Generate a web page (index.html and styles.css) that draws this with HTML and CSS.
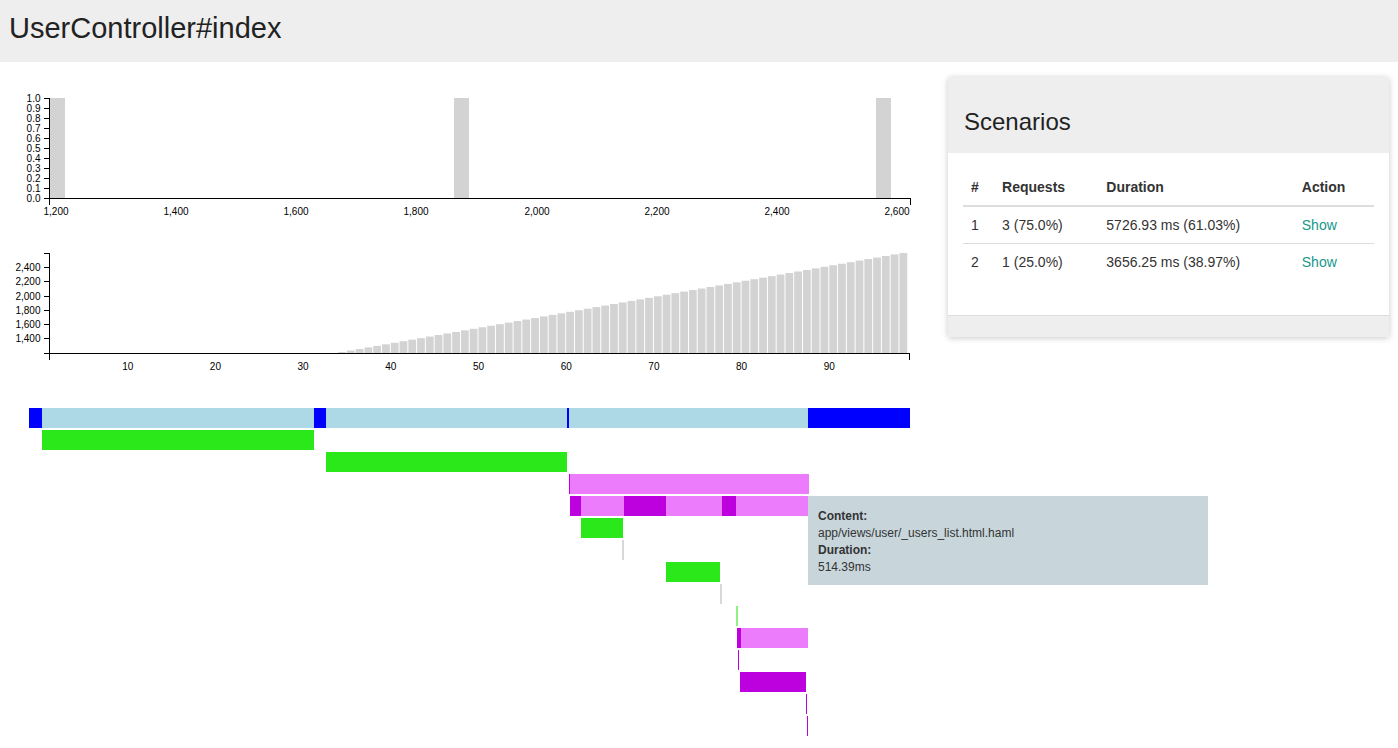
FILE: index.html
```html
<!DOCTYPE html>
<html>
<head>
<meta charset="utf-8">
<title>UserController#index</title>
<link rel="stylesheet" href="styles.css">
</head>
<body>
<header class="topbar"><h1 class="title">UserController#index</h1></header>
<main class="layout">
  <section class="charts">
    <svg class="chart" width="930" height="160" viewBox="0 62 930 160">
      <g class="bars">
        <rect x="50" y="98" width="15" height="100"/>
        <rect x="454" y="98" width="15" height="100"/>
        <rect x="876" y="98" width="15" height="100"/>
      </g>
      <g class="axis">
        <path d="M43.5,98.5H49.5V198.5H43.5"/>
        <path d="M49.5,204.5V198.5H910.5V204.5"/>
        <g class="ticks">
          <line x1="43.5" x2="49.5" y1="98.5" y2="98.5"/><line x1="43.5" x2="49.5" y1="108.5" y2="108.5"/><line x1="43.5" x2="49.5" y1="118.5" y2="118.5"/><line x1="43.5" x2="49.5" y1="128.5" y2="128.5"/><line x1="43.5" x2="49.5" y1="138.5" y2="138.5"/><line x1="43.5" x2="49.5" y1="148.5" y2="148.5"/><line x1="43.5" x2="49.5" y1="158.5" y2="158.5"/><line x1="43.5" x2="49.5" y1="168.5" y2="168.5"/><line x1="43.5" x2="49.5" y1="178.5" y2="178.5"/><line x1="43.5" x2="49.5" y1="188.5" y2="188.5"/>
        </g>
        <g class="ylabels">
          <text x="40.5" y="98.5" dy="0.32em">1.0</text>
          <text x="40.5" y="108.5" dy="0.32em">0.9</text>
          <text x="40.5" y="118.5" dy="0.32em">0.8</text>
          <text x="40.5" y="128.5" dy="0.32em">0.7</text>
          <text x="40.5" y="138.5" dy="0.32em">0.6</text>
          <text x="40.5" y="148.5" dy="0.32em">0.5</text>
          <text x="40.5" y="158.5" dy="0.32em">0.4</text>
          <text x="40.5" y="168.5" dy="0.32em">0.3</text>
          <text x="40.5" y="178.5" dy="0.32em">0.2</text>
          <text x="40.5" y="188.5" dy="0.32em">0.1</text>
          <text x="40.5" y="198.5" dy="0.32em">0.0</text>
        </g>
        <g class="xlabels">
          <text x="56" y="207.5" dy="0.71em">1,200</text>
          <text x="176" y="207.5" dy="0.71em">1,400</text>
          <text x="296" y="207.5" dy="0.71em">1,600</text>
          <text x="416" y="207.5" dy="0.71em">1,800</text>
          <text x="537" y="207.5" dy="0.71em">2,000</text>
          <text x="657" y="207.5" dy="0.71em">2,200</text>
          <text x="777" y="207.5" dy="0.71em">2,400</text>
          <text x="897" y="207.5" dy="0.71em">2,600</text>
        </g>
      </g>
    </svg>
    <svg class="chart" width="930" height="158" viewBox="0 222 930 158">
      <g class="bars" id="distbars"></g>
      <g class="axis">
        <path d="M43.5,253.5H49.5V353.5H43.5"/>
        <path d="M49.5,359.5V353.5H909.5V359.5"/>
        <g class="ticks">
          <line x1="43.5" x2="49.5" y1="267.5" y2="267.5"/><line x1="43.5" x2="49.5" y1="281.5" y2="281.5"/><line x1="43.5" x2="49.5" y1="296.5" y2="296.5"/><line x1="43.5" x2="49.5" y1="310.5" y2="310.5"/><line x1="43.5" x2="49.5" y1="324.5" y2="324.5"/><line x1="43.5" x2="49.5" y1="338.5" y2="338.5"/>
        </g>
        <g class="ylabels">
          <text x="40.5" y="267.5" dy="0.32em">2,400</text>
          <text x="40.5" y="281.5" dy="0.32em">2,200</text>
          <text x="40.5" y="296.5" dy="0.32em">2,000</text>
          <text x="40.5" y="310.5" dy="0.32em">1,800</text>
          <text x="40.5" y="324.5" dy="0.32em">1,600</text>
          <text x="40.5" y="338.5" dy="0.32em">1,400</text>
        </g>
        <g class="xlabels">
          <text x="127.7" y="362.5" dy="0.71em">10</text>
          <text x="215.4" y="362.5" dy="0.71em">20</text>
          <text x="303.1" y="362.5" dy="0.71em">30</text>
          <text x="390.8" y="362.5" dy="0.71em">40</text>
          <text x="478.5" y="362.5" dy="0.71em">50</text>
          <text x="566.2" y="362.5" dy="0.71em">60</text>
          <text x="653.9" y="362.5" dy="0.71em">70</text>
          <text x="741.6" y="362.5" dy="0.71em">80</text>
          <text x="829.3" y="362.5" dy="0.71em">90</text>
        </g>
      </g>
    </svg>
    <div class="timeline-wrap">
      <svg class="timeline" width="930" height="368" viewBox="0 380 930 368">
        <g>
          <rect class="req" x="29" y="408" width="12.7" height="20"/>
          <rect class="gap" x="41.7" y="408" width="272.3" height="20"/>
          <rect class="req" x="314" y="408" width="12" height="20"/>
          <rect class="gap" x="326" y="408" width="240.7" height="20"/>
          <rect class="req" x="566.7" y="408" width="2.6" height="20"/>
          <rect class="gap" x="569.3" y="408" width="239" height="20"/>
          <rect class="req" x="808.3" y="408" width="101.7" height="20"/>
        </g>
        <rect class="sql" x="41.7" y="430" width="272.3" height="20"/>
        <rect class="sql" x="326" y="452" width="240.7" height="20"/>
        <rect class="dark" x="569" y="474" width="1.3" height="20"/>
        <rect class="view" x="570.3" y="474" width="238.7" height="20"/>
        <rect class="dark" x="570.3" y="496" width="10.4" height="20"/>
        <rect class="view" x="580.7" y="496" width="43.6" height="20"/>
        <rect class="dark" x="624.3" y="496" width="41.7" height="20"/>
        <rect class="view" x="666" y="496" width="55.7" height="20"/>
        <rect class="dark" x="721.7" y="496" width="14.6" height="20"/>
        <rect class="view" x="736.3" y="496" width="72" height="20"/>
        <rect class="sql" x="580.7" y="518" width="42" height="20"/>
        <rect class="idle" x="622" y="540" width="2.3" height="20"/>
        <rect class="sql" x="666" y="562" width="54" height="20"/>
        <rect class="idle" x="720" y="584" width="2" height="20"/>
        <rect class="sql-light" x="736" y="606" width="1.7" height="20"/>
        <rect class="dark" x="737" y="628" width="4" height="20"/>
        <rect class="view" x="741" y="628" width="67" height="20"/>
        <rect class="dark" x="738" y="650" width="1.3" height="20"/>
        <rect class="dark" x="740" y="672" width="66" height="20"/>
        <rect class="dark" x="805.7" y="694" width="1.4" height="20"/>
        <rect class="dark" x="806.7" y="716" width="1.4" height="20"/>
      </svg>
      <div class="tooltip">
        <div class="tip-label">Content:</div>
        <div class="tip-value">app/views/user/_users_list.html.haml</div>
        <div class="tip-label">Duration:</div>
        <div class="tip-value">514.39ms</div>
      </div>
    </div>
  </section>
  <aside class="card">
    <div class="card-head"><h3 class="card-title">Scenarios</h3></div>
    <div class="card-body">
      <table class="scen">
        <thead>
          <tr><th class="c-num">#</th><th class="c-req">Requests</th><th class="c-dur">Duration</th><th class="c-act">Action</th></tr>
        </thead>
        <tbody>
          <tr><td>1</td><td>3 (75.0%)</td><td>5726.93 ms (61.03%)</td><td><a class="show" href="#">Show</a></td></tr>
          <tr><td>2</td><td>1 (25.0%)</td><td>3656.25 ms (38.97%)</td><td><a class="show" href="#">Show</a></td></tr>
        </tbody>
      </table>
    </div>
    <div class="card-foot"></div>
  </aside>
</main>
<script src="app.js"></script>
</body>
</html>
```

FILE: app.js
```js
(function () {
  var g = document.getElementById('distbars');
  var ns = 'http://www.w3.org/2000/svg';
  function x(v) { return 40.0 + 8.77 * v; }
  for (var i = 1; i <= 98; i++) {
    var h = (i - 33.4) * 1.55;
    if (h <= 0) continue;
    if (h > 100) h = 100;
    var r = document.createElementNS(ns, 'rect');
    r.setAttribute('x', x(i).toFixed(2));
    r.setAttribute('width', (x(i + 1) - x(i) - 1).toFixed(2));
    r.setAttribute('y', (353 - h).toFixed(2));
    r.setAttribute('height', h.toFixed(2));
    g.appendChild(r);
  }
})();
```

FILE: styles.css
```css
html, body {
  margin: 0;
  padding: 0;
  overflow: hidden;
}
body {
  font-family: "Liberation Sans", Arial, sans-serif;
  color: #333;
  background: #fff;
  font-size: 14px;
}
.topbar {
  height: 62px;
  box-sizing: border-box;
  background: #eee;
  padding: 11px 0 0 9px;
}
.title {
  margin: 0;
  font-size: 29px;
  line-height: 34px;
  font-weight: normal;
  color: #222;
}
.layout {
  display: flex;
  align-items: flex-start;
}
.charts {
  width: 930px;
  flex: none;
}
.chart, .timeline {
  display: block;
}
.bars rect {
  fill: #d3d3d3;
}
.axis path, .axis line {
  fill: none;
  stroke: #000;
  stroke-width: 1;
  shape-rendering: crispEdges;
}
.axis text {
  font-family: "Liberation Sans", Arial, sans-serif;
  font-size: 10px;
  fill: #000;
}
.ylabels text {
  text-anchor: end;
}
.xlabels text {
  text-anchor: middle;
}
.timeline-wrap {
  position: relative;
}
.timeline rect {
  shape-rendering: crispEdges;
}
.req { fill: #0000ff; }
.gap { fill: #add8e6; }
.sql { fill: #2ae81a; }
.sql-light { fill: #8ef083; }
.view { fill: #ec7cfb; }
.dark { fill: #bd00de; }
.idle { fill: #d8d8d8; }
.tooltip {
  position: absolute;
  left: 808px;
  top: 116px;
  width: 400px;
  height: 89px;
  box-sizing: border-box;
  padding: 11.5px 10px 0;
  background: #c8d6dc;
  font-size: 12px;
  line-height: 17.25px;
  color: #333;
}
.tip-label {
  font-weight: bold;
}
.card {
  width: 441px;
  flex: none;
  margin: 15px 0 0 18px;
  background: #fff;
  border-radius: 3px;
  box-shadow: 0 1px 6px rgba(0, 0, 0, 0.22);
  overflow: hidden;
}
.card-head {
  background: #eee;
  height: 76px;
  box-sizing: border-box;
  padding: 30px 16px 0;
}
.card-title {
  margin: 0;
  font-size: 24px;
  line-height: 30px;
  font-weight: normal;
  color: #222;
}
.card-body {
  padding: 16px 15px 15px;
}
.scen {
  width: 100%;
  border-collapse: collapse;
  margin-bottom: 20px;
}
.scen th, .scen td {
  padding: 8px;
  line-height: 20px;
  text-align: left;
  vertical-align: middle;
}
.scen th {
  font-weight: bold;
  border-bottom: 2px solid #ddd;
}
.scen tbody tr + tr td {
  border-top: 1px solid #ddd;
}
.scen tbody tr:first-child td {
  border-top: 0;
}
.c-num { width: 15px; }
.c-req { width: 88px; }
.c-dur { width: 179px; }
.c-act { width: 64px; }
.show {
  color: #17978a;
  text-decoration: none;
}
.card-foot {
  height: 22px;
  background: #eee;
  border-top: 1px solid #ddd;
  box-sizing: border-box;
}
```
